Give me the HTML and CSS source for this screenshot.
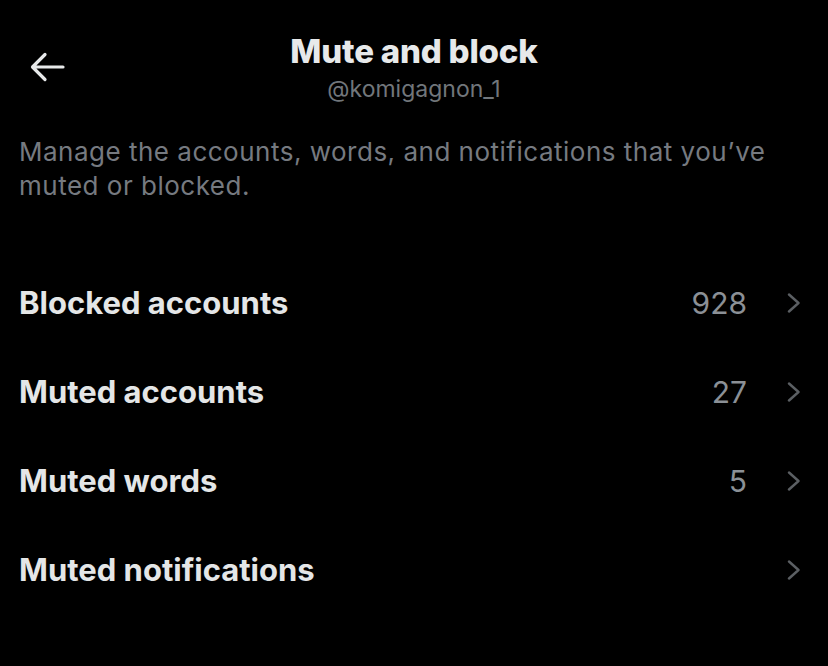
FILE: index.html
```html
<!DOCTYPE html>
<html lang="en">
<head>
<meta charset="utf-8">
<title>Mute and block</title>
<link rel="stylesheet" href="styles.css">
</head>
<body>
<div class="screen">
  <header class="header">
    <div class="back">
      <svg width="36" height="32" viewBox="0 0 36 32" aria-hidden="true">
        <path d="M34 16H4M16 3.5L3.5 16L16 28.5" fill="none" stroke="#e7e9ea" stroke-width="3.2" stroke-linecap="round" stroke-linejoin="round"/>
      </svg>
    </div>
    <div class="titles">
      <h1 class="title">Mute and block</h1>
      <div class="handle">@komigagnon_1</div>
    </div>
    <div></div>
  </header>
  <p class="desc">Manage the accounts, words, and notifications that you’ve muted or blocked.</p>
  <ul class="list">
    <li class="row"><span class="label">Blocked accounts</span><span class="count">928</span><svg class="chev" width="14" height="20" viewBox="0 0 14 20"><path d="M2 1.5L11.5 10L2 18.5" fill="none" stroke="#5b5f63" stroke-width="2.4" stroke-linecap="round" stroke-linejoin="round"/></svg></li>
    <li class="row"><span class="label">Muted accounts</span><span class="count">27</span><svg class="chev" width="14" height="20" viewBox="0 0 14 20"><path d="M2 1.5L11.5 10L2 18.5" fill="none" stroke="#5b5f63" stroke-width="2.4" stroke-linecap="round" stroke-linejoin="round"/></svg></li>
    <li class="row"><span class="label">Muted words</span><span class="count">5</span><svg class="chev" width="14" height="20" viewBox="0 0 14 20"><path d="M2 1.5L11.5 10L2 18.5" fill="none" stroke="#5b5f63" stroke-width="2.4" stroke-linecap="round" stroke-linejoin="round"/></svg></li>
    <li class="row"><span class="label">Muted notifications</span><span class="count"></span><svg class="chev" width="14" height="20" viewBox="0 0 14 20"><path d="M2 1.5L11.5 10L2 18.5" fill="none" stroke="#5b5f63" stroke-width="2.4" stroke-linecap="round" stroke-linejoin="round"/></svg></li>
  </ul>
</div>
</body>
</html>
```
FILE: styles.css
```css
html, body {
  margin: 0;
  padding: 0;
  background: #000;
}
body {
  font-family: Inter, "Noto Sans", "Liberation Sans", sans-serif;
  color: #e7e9ea;
  width: 828px;
  height: 666px;
  overflow: hidden;
}
.screen {
  display: flex;
  flex-direction: column;
}
.header {
  display: grid;
  grid-template-columns: 1fr auto 1fr;
  align-items: start;
  padding-top: 31px;
}
.back {
  padding-left: 29px;
  padding-top: 20px;
  display: flex;
}
.titles {
  display: flex;
  flex-direction: column;
  align-items: center;
}
.title {
  margin: 0;
  font-size: 33px;
  font-weight: 800;
  line-height: 40px;
  letter-spacing: -0.2px;
  color: #e7e9ea;
}
.handle {
  margin-top: 4px;
  font-size: 23px;
  line-height: 28px;
  color: #71767b;
}
.desc {
  margin: 0;
  padding: 32px 19px 0 19px;
  font-size: 26px;
  line-height: 34px;
  letter-spacing: 0.5px;
  color: #767a80;
}
.list {
  list-style: none;
  margin: 0;
  padding: 55px 0 0 0;
}
.row {
  display: flex;
  align-items: center;
  height: 89px;
  padding: 0 27px 0 19px;
}
.label {
  flex: 1;
  font-size: 31px;
  font-weight: 700;
  letter-spacing: 0;
  color: #e4e6e7;
}
.count {
  font-size: 30px;
  color: #8b9096;
  margin-right: 40px;
}
.chev {
  display: block;
}
```
